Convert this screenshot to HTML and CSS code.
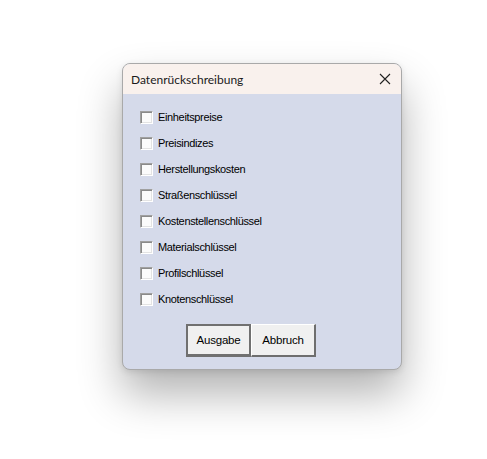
FILE: index.html
```html
<!DOCTYPE html>
<html lang="de">
<head>
<meta charset="utf-8">
<link rel="stylesheet" href="styles.css">
</head>
<body>
<div class="stage">
  <div class="dialog">
    <div class="titlebar">
      <span class="title">Datenrückschreibung</span>
      <span class="close" aria-label="Schließen">
        <svg width="12" height="12" viewBox="0 0 12 12"><path d="M1 1 L11 11 M11 1 L1 11" stroke="#222" stroke-width="1.1" fill="none"/></svg>
      </span>
    </div>
    <div class="content">
      <ul class="list">
        <li class="row"><span class="cb"></span><span class="lbl">Einheitspreise</span></li>
        <li class="row"><span class="cb"></span><span class="lbl">Preisindizes</span></li>
        <li class="row"><span class="cb"></span><span class="lbl">Herstellungskosten</span></li>
        <li class="row"><span class="cb"></span><span class="lbl">Straßenschlüssel</span></li>
        <li class="row"><span class="cb"></span><span class="lbl">Kostenstellenschlüssel</span></li>
        <li class="row"><span class="cb"></span><span class="lbl">Materialschlüssel</span></li>
        <li class="row"><span class="cb"></span><span class="lbl">Profilschlüssel</span></li>
        <li class="row"><span class="cb"></span><span class="lbl">Knotenschlüssel</span></li>
      </ul>
      <div class="buttons">
        <button class="btn btn-default">Ausgabe</button>
        <button class="btn">Abbruch</button>
      </div>
    </div>
  </div>
</div>
</body>
</html>
```

FILE: styles.css
```css
html, body {
  margin: 0;
  padding: 0;
  background: #ffffff;
}
.stage {
  min-height: 459px;
  box-sizing: border-box;
  padding: 63px 0 0 122px;
}
.dialog {
  width: 278px;
  height: 305px;
  border: 1px solid #a9a9a9;
  border-radius: 8px;
  overflow: hidden;
  background: #d5daea;
  box-shadow: 0 24px 44px rgba(0, 0, 0, 0.3), 0 2px 6px rgba(0, 0, 0, 0.1);
  display: flex;
  flex-direction: column;
}
.titlebar {
  height: 30px;
  background: #f9f1ed;
  display: flex;
  align-items: center;
  justify-content: space-between;
  padding: 0 10px 0 8px;
}
.title {
  font-family: Lato, "Noto Sans", sans-serif;
  font-size: 12px;
  color: #1a1a1a;
}
.close {
  display: flex;
  width: 12px;
  height: 12px;
}
.content {
  flex: 1;
  display: flex;
  flex-direction: column;
  padding: 10px 0 0 17px;
}
.list {
  list-style: none;
  margin: 0;
  padding: 0;
}
.row {
  height: 26px;
  display: flex;
  align-items: center;
  gap: 5px;
}
.cb {
  width: 9px;
  height: 9px;
  background: #fbfbfb;
  border-style: solid;
  border-width: 1px;
  border-color: #a0a0a0 #ffffff #ffffff #a0a0a0;
  box-shadow: inset 1px 1px 0 #8a8a8a, inset -1px -1px 0 #e3e3e3;
  padding: 1px;
  box-sizing: content-box;
}
.lbl {
  font-family: "Liberation Sans", Arial, sans-serif;
  font-size: 11px;
  letter-spacing: -0.35px;
  color: #000;
}
.buttons {
  display: flex;
  margin-top: 12px;
  padding-left: 46px;
}
.btn {
  width: 65px;
  height: 33px;
  margin: 0;
  padding: 0;
  background: #f0f0f0;
  font-family: "Liberation Sans", Arial, sans-serif;
  font-size: 11.5px;
  letter-spacing: -0.2px;
  color: #000;
  border-style: solid;
  border-width: 1px 2px 2px 1px;
  border-color: #ffffff #6e6e6e #6e6e6e #ffffff;
}
.btn-default {
  border-width: 2px 2px 3px 2px;
  border-color: #707070;
}
```
